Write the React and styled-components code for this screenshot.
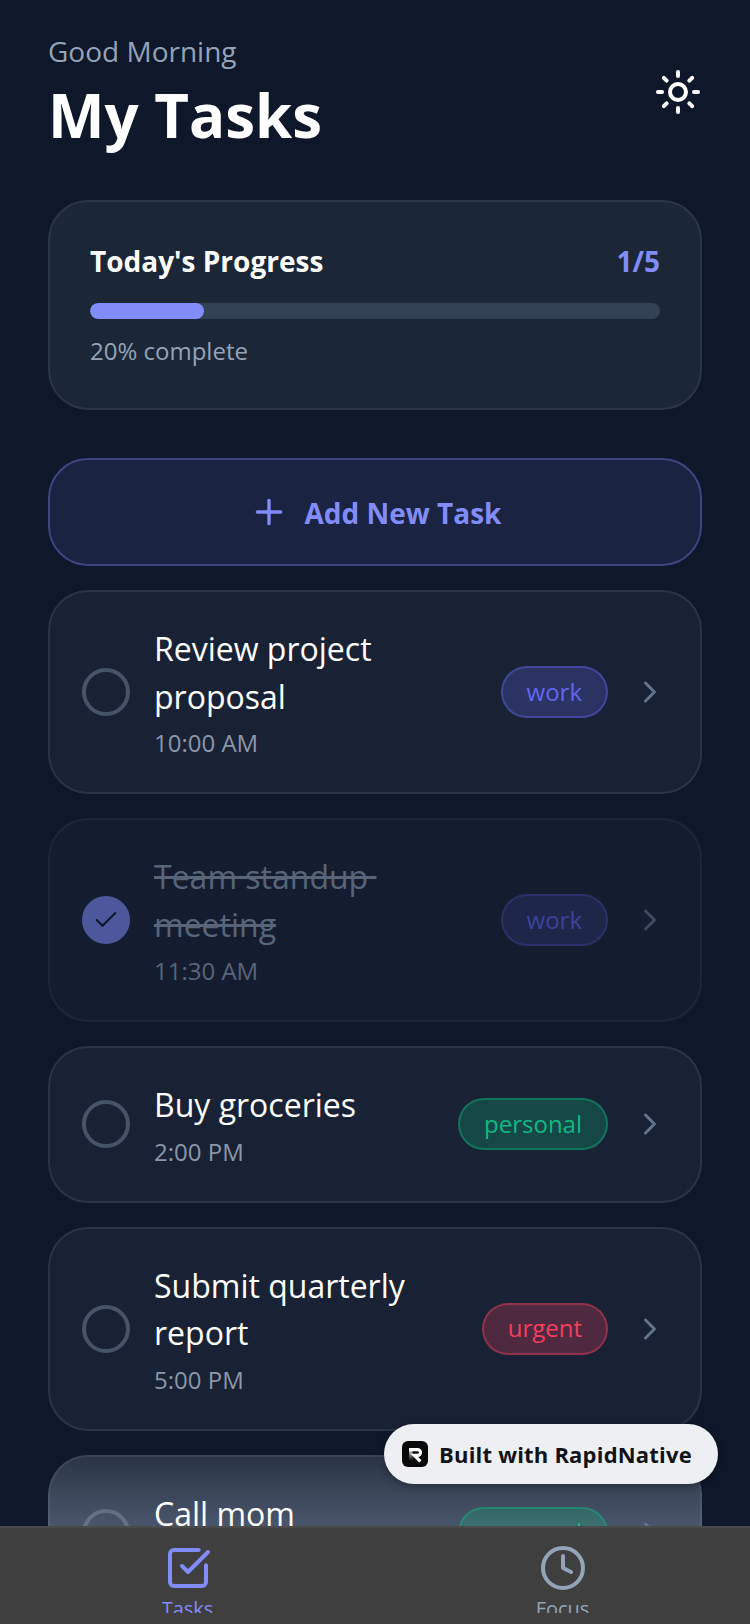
import React from 'react';
import styled, { createGlobalStyle } from 'styled-components';
import { Sun, Plus, Check, ChevronRight, SquareCheckBig, Clock } from 'lucide-react';

const GlobalStyle = createGlobalStyle`
  html, body { margin: 0; padding: 0; background: #0f172a; }
  * { box-sizing: border-box; }
  body { font-family: "Open Sans", "Noto Sans", sans-serif; }
`;

const Screen = styled.div`
  position: relative;
  width: 750px;
  height: 1624px;
  display: flex;
  flex-direction: column;
  overflow: hidden;
  background: #0f172a;
`;

const Content = styled.main`
  flex: 1;
  min-height: 0;
  overflow: hidden;
  padding: 31px 48px 0;
`;

const Header = styled.header`
  display: flex;
  justify-content: space-between;
  align-items: center;
  margin-bottom: 45px;
`;

const Greeting = styled.div`
  font-size: 28px;
  line-height: 40px;
  color: #94a3b8;
`;

const PageTitle = styled.h1`
  margin: 4px 0 0;
  font-size: 60px;
  line-height: 80px;
  font-weight: 700;
  color: #fff;
`;

const ThemeButton = styled.div`
  display: flex;
  color: #fff;
  margin-top: -2px;
`;

const ProgressCard = styled.section`
  height: 210px;
  padding: 39px 40px;
  margin-bottom: 48px;
  background: #1b2737;
  border: 2px solid #2a3545;
  border-radius: 40px;
`;

const ProgressTop = styled.div`
  display: flex;
  justify-content: space-between;
  align-items: center;
  font-size: 28px;
  line-height: 40px;
  font-weight: 700;
  color: #fff;
  margin-bottom: 22px;
`;

const ProgressCount = styled.span`
  color: #818cf8;
`;

const Track = styled.div`
  height: 16px;
  border-radius: 8px;
  background: #334155;
  overflow: hidden;
  margin-bottom: 16px;
`;

const Fill = styled.div`
  height: 100%;
  border-radius: 8px;
  background: #818cf8;
`;

const ProgressNote = styled.div`
  font-size: 24px;
  line-height: 32px;
  color: #94a3b8;
`;

const AddButton = styled.div`
  height: 108px;
  display: flex;
  align-items: center;
  justify-content: center;
  gap: 16px;
  margin-bottom: 24px;
  background: #1a2342;
  border: 2px solid #3d4680;
  border-radius: 40px;
  color: #818cf8;
  font-size: 28px;
  font-weight: 700;
`;

const AddLabel = styled.span`
  position: relative;
  top: 1px;
`;

const TaskList = styled.div`
  display: flex;
  flex-direction: column;
  gap: 24px;
`;

const TaskCard = styled.article`
  display: flex;
  align-items: center;
  gap: 24px;
  padding: 33px 32px;
  background: ${(p) =>
    p.$fade ? 'linear-gradient(to bottom, #2a3446 0, #4a566b 72px)' : '#192234'};
  background-origin: border-box;
  border: 2px solid rgba(148, 163, 184, 0.14);
  border-radius: 40px;
  opacity: ${(p) => (p.$done ? 0.55 : 1)};
`;

const Circle = styled.div`
  flex: none;
  width: 48px;
  height: 48px;
  border-radius: 50%;
  display: flex;
  align-items: center;
  justify-content: center;
  border: 4px solid ${(p) => (p.$done ? '#818cf8' : 'rgba(148, 163, 184, 0.38)')};
  background: ${(p) => (p.$done ? '#818cf8' : 'transparent')};
  color: #0e172a;
`;

const TaskBody = styled.div`
  flex: 1;
  min-width: 0;
`;

const TaskTitle = styled.div`
  font-size: 32px;
  line-height: 47.5px;
  white-space: pre-wrap;
  color: ${(p) => (p.$done ? '#94a3b8' : '#fff')};
  text-decoration: ${(p) => (p.$done ? 'line-through' : 'none')};
`;

const TaskTime = styled.div`
  margin-top: 7px;
  font-size: 24px;
  line-height: 32px;
  color: ${(p) => (p.$done ? '#94a3b8' : '#8a96aa')};
`;

const tagColors = {
  work: { bg: 'rgba(99, 102, 241, 0.25)', border: 'rgba(99, 102, 241, 0.4)', text: '#6366f1' },
  personal: { bg: 'rgba(16, 185, 129, 0.25)', border: 'rgba(16, 185, 129, 0.4)', text: '#10b981' },
  urgent: { bg: 'rgba(244, 63, 94, 0.25)', border: 'rgba(244, 63, 94, 0.4)', text: '#f43f5e' },
};

const Tag = styled.span`
  flex: none;
  height: 52px;
  display: flex;
  align-items: center;
  padding: 0 24px 2px;
  font-size: 24px;
  border-radius: 26px;
  background: ${(p) => tagColors[p.$kind].bg};
  border: 2px solid ${(p) => tagColors[p.$kind].border};
  color: ${(p) => tagColors[p.$kind].text};
`;

const Chevron = styled.div`
  flex: none;
  display: flex;
  color: #64748b;
`;

const TabBar = styled.nav`
  position: relative;
  flex: none;
  height: 98px;
  display: flex;
  background: #3f3f3f;
  border-top: 2px solid #4a4a4a;
`;

const Tab = styled.div`
  flex: 1;
  display: flex;
  flex-direction: column;
  align-items: center;
  padding-top: 16px;
  color: ${(p) => (p.$active ? '#818cf8' : '#94a3b8')};
`;

const TabLabel = styled.div`
  height: 18px;
  overflow: hidden;
  margin-top: 3px;
  font-size: 20px;
  line-height: 28px;
`;

const BuiltPill = styled.div`
  position: absolute;
  left: 384px;
  top: 1424px;
  width: 334px;
  height: 60px;
  display: flex;
  align-items: center;
  gap: 11px;
  padding-left: 18px;
  border-radius: 30px;
  background: #eeeff2;
  box-shadow: 0 2px 8px rgba(0, 0, 0, 0.3);
  color: #111318;
  font-size: 22px;
  font-weight: 700;
  letter-spacing: 0.2px;
  white-space: nowrap;
`;

const tasks = [
  { title: 'Review project proposal', time: '10:00 AM', tag: 'work' },
  { title: 'Team standup meeting', time: '11:30 AM', tag: 'work', done: true },
  { title: 'Buy groceries', time: '2:00 PM', tag: 'personal' },
  { title: 'Submit quarterly report', time: '5:00 PM', tag: 'urgent' },
  { title: 'Call mom', time: '7:00 PM', tag: 'personal', fade: true },
];

const RapidLogo = () => (
  <svg width="26" height="26" viewBox="0 0 26 26">
    <defs>
      <linearGradient id="rapidStem" x1="0" y1="0" x2="0" y2="1">
        <stop offset="0" stopColor="#bbb" />
        <stop offset="1" stopColor="#111" />
      </linearGradient>
    </defs>
    <rect width="26" height="26" rx="6" fill="#0a0a0a" />
    <rect x="7" y="10" width="3.6" height="9.5" fill="url(#rapidStem)" />
    <path d="M7 8.6h8.6a2.9 2.9 0 0 1 0 5.8h-3.4l6.2 6" fill="none" stroke="#fff" strokeWidth="3.2" />
  </svg>
);

const App = () => (
  <Screen>
    <GlobalStyle />
    <Content>
      <Header>
        <div>
          <Greeting>Good Morning</Greeting>
          <PageTitle>My Tasks</PageTitle>
        </div>
        <ThemeButton>
          <Sun size={48} strokeWidth={2} />
        </ThemeButton>
      </Header>

      <ProgressCard>
        <ProgressTop>
          <span>Today's Progress</span>
          <ProgressCount>1/5</ProgressCount>
        </ProgressTop>
        <Track>
          <Fill style={{ width: `${(1 / 5) * 100}%` }} />
        </Track>
        <ProgressNote>20% complete</ProgressNote>
      </ProgressCard>

      <AddButton>
        <Plus size={40} strokeWidth={2} />
        <AddLabel>Add New Task</AddLabel>
      </AddButton>

      <TaskList>
        {tasks.map((task) => (
          <TaskCard key={task.title} $done={task.done} $fade={task.fade}>
            <Circle $done={task.done}>
              {task.done && <Check size={28} strokeWidth={1.75} />}
            </Circle>
            <TaskBody>
              <TaskTitle $done={task.done}>{task.title}</TaskTitle>
              <TaskTime $done={task.done}>{task.time}</TaskTime>
            </TaskBody>
            <Tag $kind={task.tag}>{task.tag}</Tag>
            <Chevron>
              <ChevronRight size={36} strokeWidth={2} />
            </Chevron>
          </TaskCard>
        ))}
      </TaskList>
    </Content>

    <TabBar>
      <Tab $active>
        <SquareCheckBig size={48} strokeWidth={2} />
        <TabLabel>Tasks</TabLabel>
      </Tab>
      <Tab>
        <Clock size={48} strokeWidth={2} />
        <TabLabel>Focus</TabLabel>
      </Tab>
    </TabBar>

    <BuiltPill>
      <RapidLogo />
      Built with RapidNative
    </BuiltPill>
  </Screen>
);

export default App;
